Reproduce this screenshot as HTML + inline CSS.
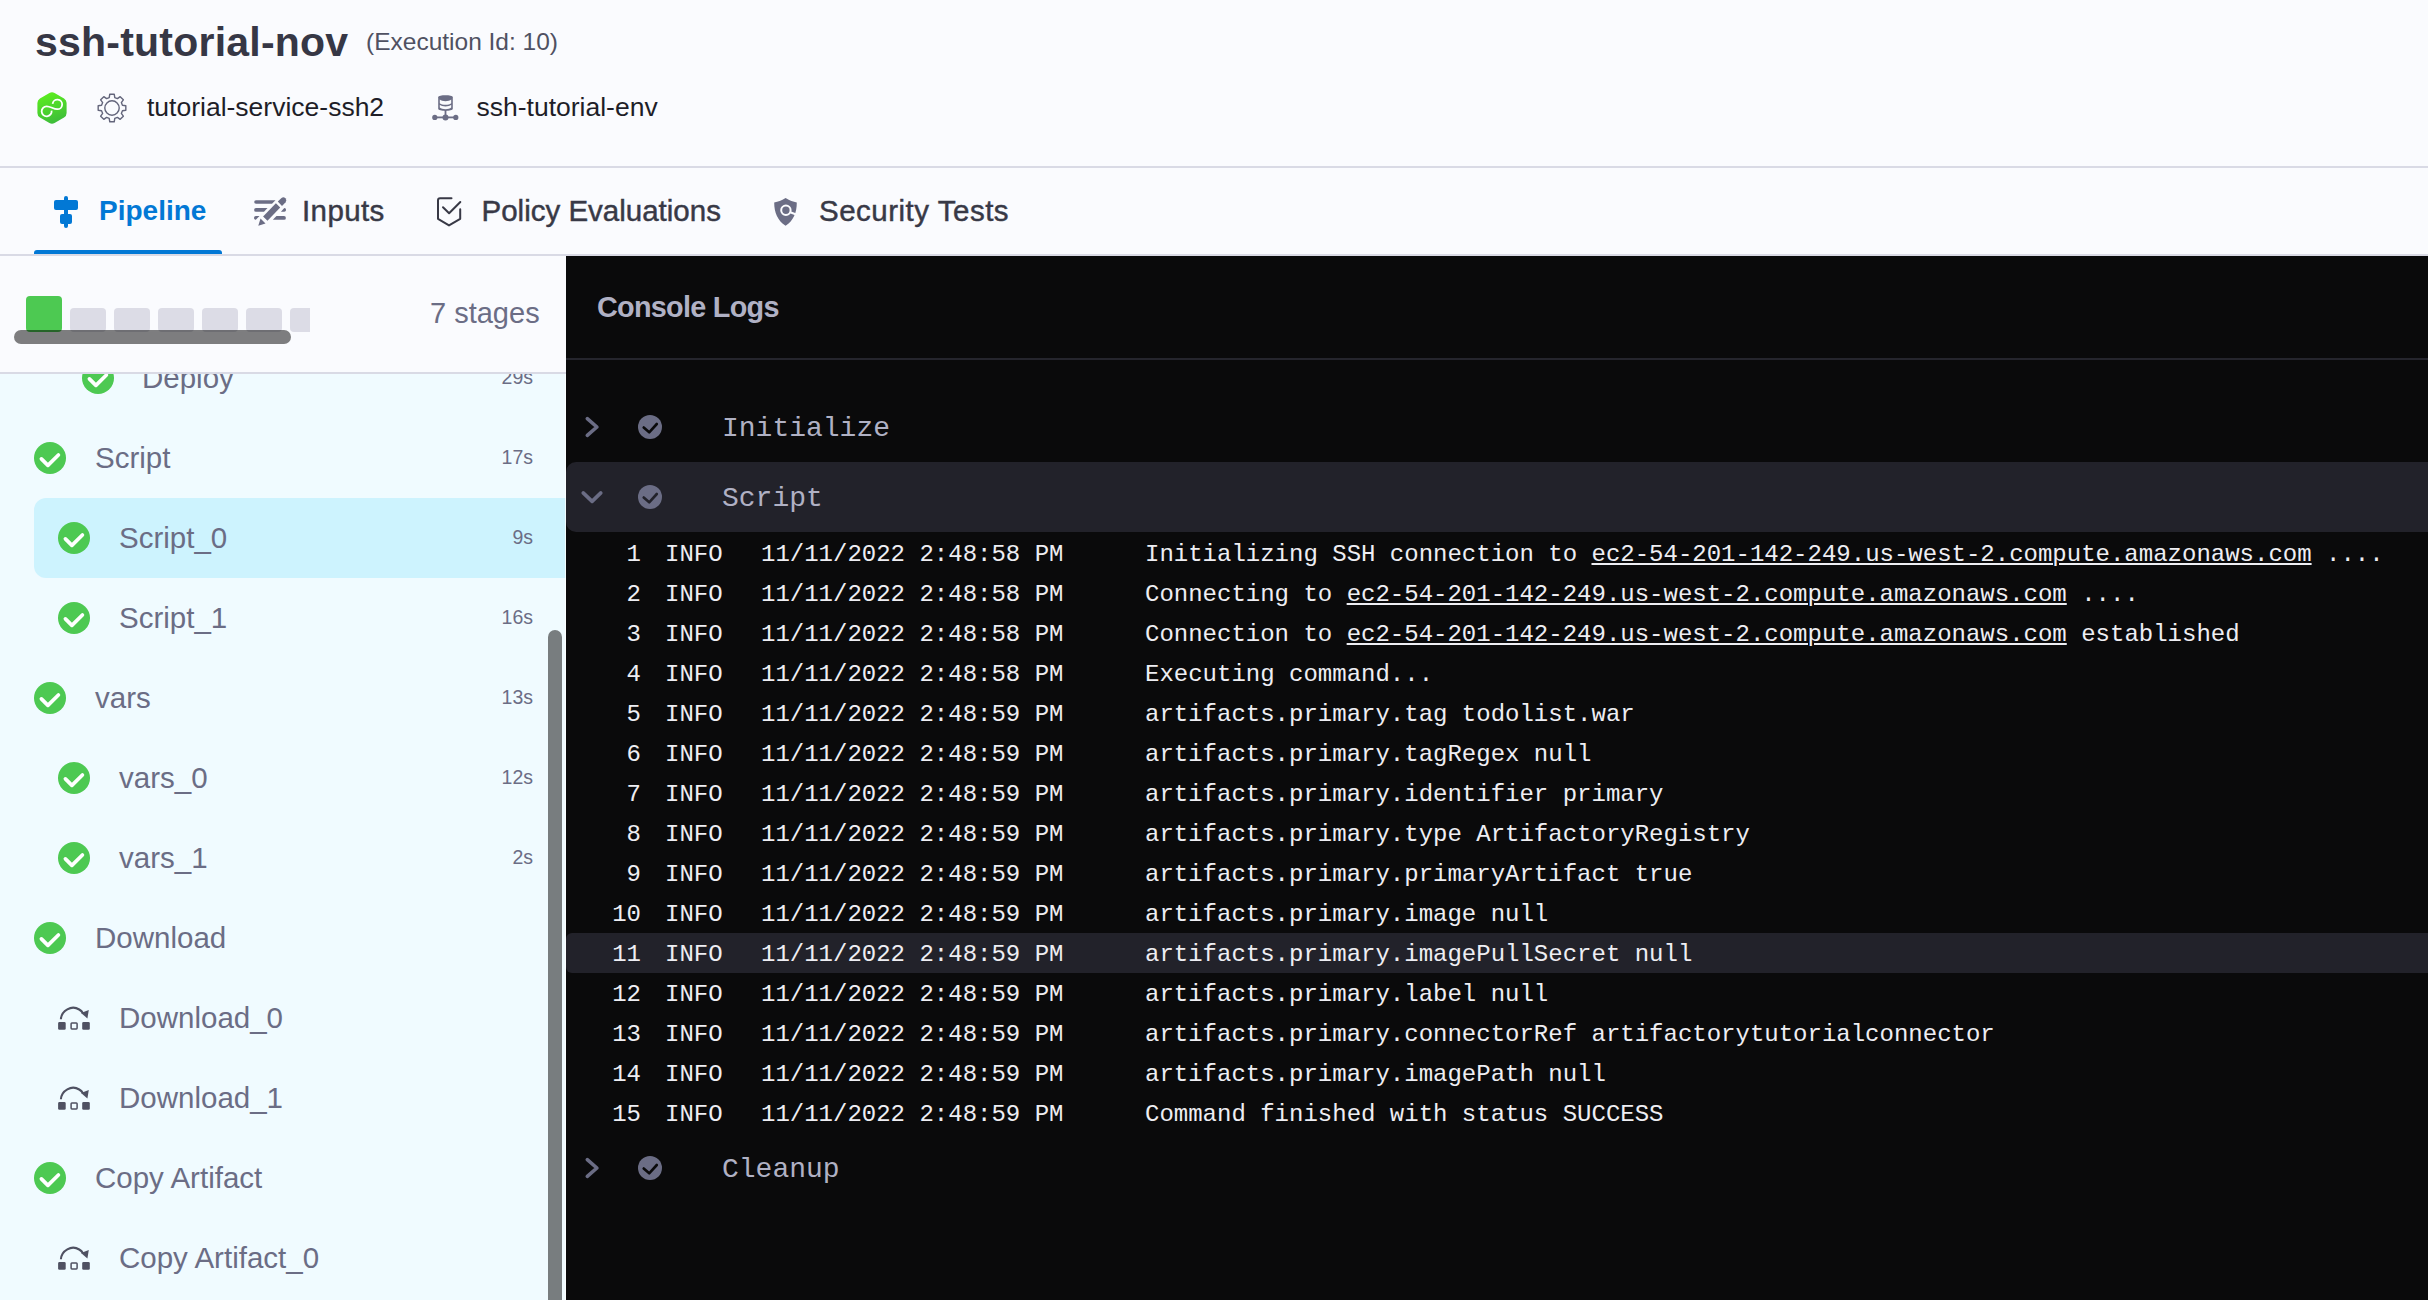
<!DOCTYPE html>
<html><head><meta charset="utf-8">
<style>
html,body{margin:0;padding:0;}
body{width:2428px;height:1300px;overflow:hidden;position:relative;background:#FAFBFE;font-family:"Liberation Sans", sans-serif;}
.t{position:absolute;line-height:1;white-space:pre;}
.abs{position:absolute;}
svg{position:absolute;left:0;top:0;overflow:visible;}
</style></head><body>
<div class="t" style="left:35px;top:22.29px;font-size:41px;color:#363745;font-weight:700;font-family:'Liberation Sans', sans-serif;letter-spacing:0.22px">ssh-tutorial-nov</div>
<div class="t" style="left:366px;top:29.76px;font-size:24.5px;color:#4F5162;font-weight:400;font-family:'Liberation Sans', sans-serif;">(Execution Id: 10)</div>
<div class="t" style="left:147px;top:94.36px;font-size:26.5px;color:#1E1E28;font-weight:400;font-family:'Liberation Sans', sans-serif;">tutorial-service-ssh2</div>
<div class="t" style="left:476.5px;top:94.36px;font-size:26.5px;color:#1E1E28;font-weight:400;font-family:'Liberation Sans', sans-serif;">ssh-tutorial-env</div>
<div class="abs" style="left:0;top:166px;width:2428px;height:2px;background:#D9DAE5"></div>
<svg width="2428" height="260" viewBox="0 0 2428 260"><defs><linearGradient id="hg" x1="0.35" y1="0" x2="0.65" y2="1"><stop offset="0" stop-color="#5CEE1E"/><stop offset="1" stop-color="#3CBA3C"/></linearGradient></defs><path d="M49.42,92.92 Q52,91.4 54.58,92.92 L64.02,98.48 Q66.6,100 66.60,103.00 L66.60,113.00 Q66.6,116 64.02,117.52 L54.58,123.08 Q52,124.6 49.42,123.08 L39.98,117.52 Q37.4,116 37.40,113.00 L37.40,103.00 Q37.4,100 39.98,98.48 Z" fill="url(#hg)"/><path d="M51.6,110.6 A5,5 0 1 1 46.7,106.3 C50.5,106.3 53.5,109.2 57.2,109.2 A4.8,4.8 0 1 0 52.6,103.8" fill="none" stroke="#fff" stroke-width="1.8" stroke-linecap="butt"/><path d="M109.22,97.56 L109.77,94.18 L114.23,94.18 L114.78,97.56 L117.42,98.66 L120.20,96.65 L123.35,99.80 L121.34,102.58 L122.44,105.22 L125.82,105.77 L125.82,110.23 L122.44,110.78 L121.34,113.42 L123.35,116.20 L120.20,119.35 L117.42,117.34 L114.78,118.44 L114.23,121.82 L109.77,121.82 L109.22,118.44 L106.58,117.34 L103.80,119.35 L100.65,116.20 L102.66,113.42 L101.56,110.78 L98.18,110.23 L98.18,105.77 L101.56,105.22 L102.66,102.58 L100.65,99.80 L103.80,96.65 L106.58,98.66 Z" fill="none" stroke="#63657B" stroke-width="1.4" stroke-linejoin="round"/><circle cx="112" cy="108" r="7.2" fill="none" stroke="#63657B" stroke-width="1.4"/><path d="M438.2,97.2 C438.2,94.6 452.8,94.6 452.8,97.2 L452.8,108.8 C452.8,111.6 438.2,111.6 438.2,108.8 Z" fill="#6B6D85"/><path d="M439.8,99.6 C442,101.8 449,101.8 451.2,99.6 L451.2,103.2 C449,105.4 442,105.4 439.8,103.2 Z" fill="#FAFBFE"/><path d="M439.8,104.8 C442,107 449,107 451.2,104.8 L451.2,107.6 C449,109.8 442,109.8 439.8,107.6 Z" fill="#FAFBFE"/><g fill="#6B6D85"><rect x="444.6" y="110" width="1.8" height="6"/><rect x="435" y="116.5" width="21" height="1.8"/><circle cx="434.8" cy="117.4" r="2.6"/><circle cx="445.5" cy="117.4" r="3"/><circle cx="455.8" cy="117.4" r="2.6"/></g><g fill="#0278D5"><rect x="64" y="196" width="4" height="32" rx="2"/><rect x="54" y="200" width="24" height="10" rx="2"/><rect x="60" y="214" width="12" height="10" rx="2"/></g><g fill="#6B6D85"><path d="M256,200.2 L275.5,200.2 L272,203.8 L256,203.8 A1.8,1.8 0 0 1 256,200.2 Z"/><path d="M256,208 L267.5,208 L264,211.8 L256,211.8 A1.9,1.9 0 0 1 256,208 Z"/><path d="M284.3,208 A1.9,1.9 0 0 1 284,211.8 L280.9,211.8 Z"/><path d="M256,216 L259.5,216 L255.8,219.8 A1.9,1.9 0 0 1 256,216 Z"/><path d="M276.5,216 L284,216 A1.9,1.9 0 0 1 284,219.8 L272.8,219.8 Z"/><path d="M275.9,203.2 L280.2,207.6 L267.5,220.8 L263.1,216.4 Z"/><path d="M277.8,201.5 L281.5,198 A3,3 0 0 1 285.6,202.3 L282,206 Z"/><path d="M260.5,218.6 L265.5,223.6 L258.3,225.8 Z"/></g><g fill="none" stroke="#383946" stroke-width="2" stroke-linecap="round" stroke-linejoin="round"><path d="M451.5,198.3 L440,198.3 Q438,198.3 438,200.3 L438,218.8 L449,225.4 L460.2,218.8 L460.2,209.2"/><path d="M443,207.2 L449.1,213.2 L460.3,202"/></g><path d="M785.6,198 C790,200.6 793,201.8 796.8,202.5 C796.8,213 793.5,220.5 785.6,225.8 C777.7,220.5 774.2,213 774.2,202.5 C778.2,201.8 781.2,200.6 785.6,198 Z" fill="#6B6D85"/><circle cx="785.9" cy="210.2" r="4.7" fill="none" stroke="#FAFBFE" stroke-width="2"/><path d="M790.2,212.2 L797.5,215" stroke="#FAFBFE" stroke-width="2"/></svg>
<div class="t" style="left:99px;top:197.29px;font-size:28px;color:#0278D5;font-weight:700;font-family:'Liberation Sans', sans-serif;">Pipeline</div>
<div class="t" style="left:302px;top:196.02px;font-size:29.5px;color:#383946;font-weight:400;font-family:'Liberation Sans', sans-serif;letter-spacing:0.4px;-webkit-text-stroke:0.45px #383946">Inputs</div>
<div class="t" style="left:481.5px;top:196.02px;font-size:29.5px;color:#383946;font-weight:400;font-family:'Liberation Sans', sans-serif;-webkit-text-stroke:0.45px #383946">Policy Evaluations</div>
<div class="t" style="left:819px;top:196.02px;font-size:29.5px;color:#383946;font-weight:400;font-family:'Liberation Sans', sans-serif;letter-spacing:0.5px;-webkit-text-stroke:0.45px #383946">Security Tests</div>
<div class="abs" style="left:0;top:254px;width:2428px;height:2px;background:#D9DAE5"></div>
<div class="abs" style="left:34px;top:250px;width:188px;height:4px;background:#0278D5;border-radius:3px 3px 0 0"></div>
<div class="abs" style="left:0;top:256px;width:566px;height:1044px;background:#F0FBFF;overflow:hidden">
<div class="abs" style="left:34px;top:242px;width:532px;height:80px;background:#CDF3FE;border-radius:12px 0 0 12px"></div>
<svg style="left:82px;top:105.5px" width="32" height="32" viewBox="0 0 32 32"><circle cx="16" cy="16" r="16" fill="#4DC952"/><path d="M7.4,16.9 L13.9,23.4 L24.4,13" fill="none" stroke="#fff" stroke-width="3.7" stroke-linecap="round" stroke-linejoin="round"/></svg><div class="t" style="left:142px;top:107.02px;font-size:29.5px;color:#6B6D85;font-weight:400;font-family:'Liberation Sans', sans-serif;">Deploy</div>
<div class="t" style="left:0;width:533px;text-align:right;top:112.49px;font-size:19.5px;color:#6B6D85">29s</div>
<svg style="left:34px;top:185.5px" width="32" height="32" viewBox="0 0 32 32"><circle cx="16" cy="16" r="16" fill="#4DC952"/><path d="M7.4,16.9 L13.9,23.4 L24.4,13" fill="none" stroke="#fff" stroke-width="3.7" stroke-linecap="round" stroke-linejoin="round"/></svg><div class="t" style="left:95px;top:187.02px;font-size:29.5px;color:#6B6D85;font-weight:400;font-family:'Liberation Sans', sans-serif;">Script</div>
<div class="t" style="left:0;width:533px;text-align:right;top:192.49px;font-size:19.5px;color:#6B6D85">17s</div>
<svg style="left:58px;top:265.5px" width="32" height="32" viewBox="0 0 32 32"><circle cx="16" cy="16" r="16" fill="#4DC952"/><path d="M7.4,16.9 L13.9,23.4 L24.4,13" fill="none" stroke="#fff" stroke-width="3.7" stroke-linecap="round" stroke-linejoin="round"/></svg><div class="t" style="left:119px;top:267.02px;font-size:29.5px;color:#6B6D85;font-weight:400;font-family:'Liberation Sans', sans-serif;">Script_0</div>
<div class="t" style="left:0;width:533px;text-align:right;top:272.49px;font-size:19.5px;color:#6B6D85">9s</div>
<svg style="left:58px;top:345.5px" width="32" height="32" viewBox="0 0 32 32"><circle cx="16" cy="16" r="16" fill="#4DC952"/><path d="M7.4,16.9 L13.9,23.4 L24.4,13" fill="none" stroke="#fff" stroke-width="3.7" stroke-linecap="round" stroke-linejoin="round"/></svg><div class="t" style="left:119px;top:347.02px;font-size:29.5px;color:#6B6D85;font-weight:400;font-family:'Liberation Sans', sans-serif;">Script_1</div>
<div class="t" style="left:0;width:533px;text-align:right;top:352.49px;font-size:19.5px;color:#6B6D85">16s</div>
<svg style="left:34px;top:425.5px" width="32" height="32" viewBox="0 0 32 32"><circle cx="16" cy="16" r="16" fill="#4DC952"/><path d="M7.4,16.9 L13.9,23.4 L24.4,13" fill="none" stroke="#fff" stroke-width="3.7" stroke-linecap="round" stroke-linejoin="round"/></svg><div class="t" style="left:95px;top:427.02px;font-size:29.5px;color:#6B6D85;font-weight:400;font-family:'Liberation Sans', sans-serif;">vars</div>
<div class="t" style="left:0;width:533px;text-align:right;top:432.49px;font-size:19.5px;color:#6B6D85">13s</div>
<svg style="left:58px;top:505.5px" width="32" height="32" viewBox="0 0 32 32"><circle cx="16" cy="16" r="16" fill="#4DC952"/><path d="M7.4,16.9 L13.9,23.4 L24.4,13" fill="none" stroke="#fff" stroke-width="3.7" stroke-linecap="round" stroke-linejoin="round"/></svg><div class="t" style="left:119px;top:507.02px;font-size:29.5px;color:#6B6D85;font-weight:400;font-family:'Liberation Sans', sans-serif;">vars_0</div>
<div class="t" style="left:0;width:533px;text-align:right;top:512.49px;font-size:19.5px;color:#6B6D85">12s</div>
<svg style="left:58px;top:585.5px" width="32" height="32" viewBox="0 0 32 32"><circle cx="16" cy="16" r="16" fill="#4DC952"/><path d="M7.4,16.9 L13.9,23.4 L24.4,13" fill="none" stroke="#fff" stroke-width="3.7" stroke-linecap="round" stroke-linejoin="round"/></svg><div class="t" style="left:119px;top:587.02px;font-size:29.5px;color:#6B6D85;font-weight:400;font-family:'Liberation Sans', sans-serif;">vars_1</div>
<div class="t" style="left:0;width:533px;text-align:right;top:592.49px;font-size:19.5px;color:#6B6D85">2s</div>
<svg style="left:34px;top:665.5px" width="32" height="32" viewBox="0 0 32 32"><circle cx="16" cy="16" r="16" fill="#4DC952"/><path d="M7.4,16.9 L13.9,23.4 L24.4,13" fill="none" stroke="#fff" stroke-width="3.7" stroke-linecap="round" stroke-linejoin="round"/></svg><div class="t" style="left:95px;top:667.02px;font-size:29.5px;color:#6B6D85;font-weight:400;font-family:'Liberation Sans', sans-serif;">Download</div>
<svg style="left:58px;top:749px" width="34" height="30" viewBox="0 0 34 30"><path d="M2.9,14.3 C3.4,5.6 13.5,-0.4 21.2,4.5 C23,5.6 24.3,7 25,8.2" fill="none" stroke="#4F5162" stroke-width="2.1"/><path d="M30.8,5 L29.4,13.4 L23,7.9 Z" fill="#4F5162"/><rect x="0.1" y="17.1" width="7.6" height="7.6" rx="1.3" fill="#4F5162"/><rect x="13.1" y="17.9" width="6" height="6" rx="0.8" fill="none" stroke="#4F5162" stroke-width="1.5"/><rect x="24.2" y="17.1" width="7.6" height="7.6" rx="1.3" fill="#4F5162"/></svg><div class="t" style="left:119px;top:747.02px;font-size:29.5px;color:#6B6D85;font-weight:400;font-family:'Liberation Sans', sans-serif;">Download_0</div>
<svg style="left:58px;top:829px" width="34" height="30" viewBox="0 0 34 30"><path d="M2.9,14.3 C3.4,5.6 13.5,-0.4 21.2,4.5 C23,5.6 24.3,7 25,8.2" fill="none" stroke="#4F5162" stroke-width="2.1"/><path d="M30.8,5 L29.4,13.4 L23,7.9 Z" fill="#4F5162"/><rect x="0.1" y="17.1" width="7.6" height="7.6" rx="1.3" fill="#4F5162"/><rect x="13.1" y="17.9" width="6" height="6" rx="0.8" fill="none" stroke="#4F5162" stroke-width="1.5"/><rect x="24.2" y="17.1" width="7.6" height="7.6" rx="1.3" fill="#4F5162"/></svg><div class="t" style="left:119px;top:827.02px;font-size:29.5px;color:#6B6D85;font-weight:400;font-family:'Liberation Sans', sans-serif;">Download_1</div>
<svg style="left:34px;top:905.5px" width="32" height="32" viewBox="0 0 32 32"><circle cx="16" cy="16" r="16" fill="#4DC952"/><path d="M7.4,16.9 L13.9,23.4 L24.4,13" fill="none" stroke="#fff" stroke-width="3.7" stroke-linecap="round" stroke-linejoin="round"/></svg><div class="t" style="left:95px;top:907.02px;font-size:29.5px;color:#6B6D85;font-weight:400;font-family:'Liberation Sans', sans-serif;">Copy Artifact</div>
<svg style="left:58px;top:989px" width="34" height="30" viewBox="0 0 34 30"><path d="M2.9,14.3 C3.4,5.6 13.5,-0.4 21.2,4.5 C23,5.6 24.3,7 25,8.2" fill="none" stroke="#4F5162" stroke-width="2.1"/><path d="M30.8,5 L29.4,13.4 L23,7.9 Z" fill="#4F5162"/><rect x="0.1" y="17.1" width="7.6" height="7.6" rx="1.3" fill="#4F5162"/><rect x="13.1" y="17.9" width="6" height="6" rx="0.8" fill="none" stroke="#4F5162" stroke-width="1.5"/><rect x="24.2" y="17.1" width="7.6" height="7.6" rx="1.3" fill="#4F5162"/></svg><div class="t" style="left:119px;top:987.02px;font-size:29.5px;color:#6B6D85;font-weight:400;font-family:'Liberation Sans', sans-serif;">Copy Artifact_0</div>
<div class="abs" style="left:548px;top:374px;width:14px;height:700px;background:rgba(0,0,0,0.5);border-radius:7px"></div>
<div class="abs" style="left:565px;top:0;width:1px;height:1044px;background:rgba(255,255,255,0.7)"></div>
<div class="abs" style="left:0;top:0;width:566px;height:116px;background:#FAFBFE"></div>
<div class="abs" style="left:0;top:116px;width:566px;height:2px;background:#D9DAE5"></div>
<div class="abs" style="left:26px;top:40px;width:36px;height:36px;background:#4DC952;border-radius:4px"></div>
<div class="abs" style="left:70px;top:52px;width:36px;height:24px;background:#DCDCE6;border-radius:4px"></div>
<div class="abs" style="left:114px;top:52px;width:36px;height:24px;background:#DCDCE6;border-radius:4px"></div>
<div class="abs" style="left:158px;top:52px;width:36px;height:24px;background:#DCDCE6;border-radius:4px"></div>
<div class="abs" style="left:202px;top:52px;width:36px;height:24px;background:#DCDCE6;border-radius:4px"></div>
<div class="abs" style="left:246px;top:52px;width:36px;height:24px;background:#DCDCE6;border-radius:4px"></div>
<div class="abs" style="left:290px;top:52px;width:20px;height:24px;background:#DCDCE6;border-radius:4px 0 0 4px"></div>
<div class="abs" style="left:14px;top:74px;width:277px;height:14px;background:rgba(0,0,0,0.5);border-radius:7px"></div>
<div class="t" style="left:430px;top:43.45px;font-size:29px;color:#6B6D85;font-weight:400;font-family:'Liberation Sans', sans-serif;">7 stages</div>
</div>
<div class="abs" style="left:566px;top:256px;width:1862px;height:1044px;background:#0A0A0B;overflow:hidden">
<div class="t" style="left:31px;top:36.62px;font-size:28.8px;color:#B0B1C4;font-weight:700;font-family:'Liberation Sans', sans-serif;letter-spacing:-0.72px">Console Logs</div>
<div class="abs" style="left:0;top:102px;width:1862px;height:2px;background:#25252D"></div>
<svg style="left:0;top:151px" width="40" height="40" viewBox="0 0 40 40"><path d="M21.3,11.6 L30.9,20 L21.3,28.4" fill="none" stroke="#6B6D85" stroke-width="3.6" stroke-linecap="round" stroke-linejoin="round"/></svg><svg style="left:72px;top:159px" width="24" height="24" viewBox="0 0 24 24"><circle cx="12" cy="12" r="12" fill="#6B6D85"/><path d="M5.7,12.5 L11.2,17.3 L18.8,9" fill="none" stroke="#0A0A0B" stroke-width="2.6" stroke-linecap="round" stroke-linejoin="round"/></svg><div class="t" style="left:156px;top:158.55px;font-size:28px;color:#B0B1C4;font-weight:400;font-family:'Liberation Mono', monospace;">Initialize</div>
<div class="abs" style="left:0;top:206px;width:1880px;height:70px;background:#22222A;border-radius:10px"></div>
<svg style="left:0;top:221px" width="40" height="40" viewBox="0 0 40 40"><path d="M17.2,15.9 L26.1,24.4 L34.8,15.9" fill="none" stroke="#6B6D85" stroke-width="3.6" stroke-linecap="round" stroke-linejoin="round"/></svg><svg style="left:72px;top:229px" width="24" height="24" viewBox="0 0 24 24"><circle cx="12" cy="12" r="12" fill="#6B6D85"/><path d="M5.7,12.5 L11.2,17.3 L18.8,9" fill="none" stroke="#22222A" stroke-width="2.6" stroke-linecap="round" stroke-linejoin="round"/></svg><div class="t" style="left:156px;top:228.55px;font-size:28px;color:#B0B1C4;font-weight:400;font-family:'Liberation Mono', monospace;">Script</div>
<svg style="left:0;top:892px" width="40" height="40" viewBox="0 0 40 40"><path d="M21.3,11.6 L30.9,20 L21.3,28.4" fill="none" stroke="#6B6D85" stroke-width="3.6" stroke-linecap="round" stroke-linejoin="round"/></svg><svg style="left:72px;top:900px" width="24" height="24" viewBox="0 0 24 24"><circle cx="12" cy="12" r="12" fill="#6B6D85"/><path d="M5.7,12.5 L11.2,17.3 L18.8,9" fill="none" stroke="#0A0A0B" stroke-width="2.6" stroke-linecap="round" stroke-linejoin="round"/></svg><div class="t" style="left:156px;top:899.55px;font-size:28px;color:#B0B1C4;font-weight:400;font-family:'Liberation Mono', monospace;">Cleanup</div>
<div class="abs" style="left:0;top:677px;width:1880px;height:40px;background:#22222A;border-radius:6px"></div>
<div class="t" style="left:0;width:75px;text-align:right;top:286.61px;font-size:24px;font-family:'Liberation Mono', monospace;color:#EEEEF3">1</div>
<div class="t" style="left:99px;top:286.61px;font-size:24px;color:#EEEEF3;font-weight:400;font-family:'Liberation Mono', monospace;">INFO</div>
<div class="t" style="left:195px;top:286.61px;font-size:24px;color:#EEEEF3;font-weight:400;font-family:'Liberation Mono', monospace;">11/11/2022 2:48:58 PM</div>
<div class="t" style="left:579px;top:286.61px;font-size:24px;color:#EEEEF3;font-weight:400;font-family:'Liberation Mono', monospace;">Initializing SSH connection to <span style="text-decoration:underline;text-decoration-thickness:2px;text-underline-offset:2px">ec2-54-201-142-249.us-west-2.compute.amazonaws.com</span> ....</div>
<div class="t" style="left:0;width:75px;text-align:right;top:326.61px;font-size:24px;font-family:'Liberation Mono', monospace;color:#EEEEF3">2</div>
<div class="t" style="left:99px;top:326.61px;font-size:24px;color:#EEEEF3;font-weight:400;font-family:'Liberation Mono', monospace;">INFO</div>
<div class="t" style="left:195px;top:326.61px;font-size:24px;color:#EEEEF3;font-weight:400;font-family:'Liberation Mono', monospace;">11/11/2022 2:48:58 PM</div>
<div class="t" style="left:579px;top:326.61px;font-size:24px;color:#EEEEF3;font-weight:400;font-family:'Liberation Mono', monospace;">Connecting to <span style="text-decoration:underline;text-decoration-thickness:2px;text-underline-offset:2px">ec2-54-201-142-249.us-west-2.compute.amazonaws.com</span> ....</div>
<div class="t" style="left:0;width:75px;text-align:right;top:366.61px;font-size:24px;font-family:'Liberation Mono', monospace;color:#EEEEF3">3</div>
<div class="t" style="left:99px;top:366.61px;font-size:24px;color:#EEEEF3;font-weight:400;font-family:'Liberation Mono', monospace;">INFO</div>
<div class="t" style="left:195px;top:366.61px;font-size:24px;color:#EEEEF3;font-weight:400;font-family:'Liberation Mono', monospace;">11/11/2022 2:48:58 PM</div>
<div class="t" style="left:579px;top:366.61px;font-size:24px;color:#EEEEF3;font-weight:400;font-family:'Liberation Mono', monospace;">Connection to <span style="text-decoration:underline;text-decoration-thickness:2px;text-underline-offset:2px">ec2-54-201-142-249.us-west-2.compute.amazonaws.com</span> established</div>
<div class="t" style="left:0;width:75px;text-align:right;top:406.61px;font-size:24px;font-family:'Liberation Mono', monospace;color:#EEEEF3">4</div>
<div class="t" style="left:99px;top:406.61px;font-size:24px;color:#EEEEF3;font-weight:400;font-family:'Liberation Mono', monospace;">INFO</div>
<div class="t" style="left:195px;top:406.61px;font-size:24px;color:#EEEEF3;font-weight:400;font-family:'Liberation Mono', monospace;">11/11/2022 2:48:58 PM</div>
<div class="t" style="left:579px;top:406.61px;font-size:24px;color:#EEEEF3;font-weight:400;font-family:'Liberation Mono', monospace;">Executing command...</div>
<div class="t" style="left:0;width:75px;text-align:right;top:446.61px;font-size:24px;font-family:'Liberation Mono', monospace;color:#EEEEF3">5</div>
<div class="t" style="left:99px;top:446.61px;font-size:24px;color:#EEEEF3;font-weight:400;font-family:'Liberation Mono', monospace;">INFO</div>
<div class="t" style="left:195px;top:446.61px;font-size:24px;color:#EEEEF3;font-weight:400;font-family:'Liberation Mono', monospace;">11/11/2022 2:48:59 PM</div>
<div class="t" style="left:579px;top:446.61px;font-size:24px;color:#EEEEF3;font-weight:400;font-family:'Liberation Mono', monospace;">artifacts.primary.tag todolist.war</div>
<div class="t" style="left:0;width:75px;text-align:right;top:486.61px;font-size:24px;font-family:'Liberation Mono', monospace;color:#EEEEF3">6</div>
<div class="t" style="left:99px;top:486.61px;font-size:24px;color:#EEEEF3;font-weight:400;font-family:'Liberation Mono', monospace;">INFO</div>
<div class="t" style="left:195px;top:486.61px;font-size:24px;color:#EEEEF3;font-weight:400;font-family:'Liberation Mono', monospace;">11/11/2022 2:48:59 PM</div>
<div class="t" style="left:579px;top:486.61px;font-size:24px;color:#EEEEF3;font-weight:400;font-family:'Liberation Mono', monospace;">artifacts.primary.tagRegex null</div>
<div class="t" style="left:0;width:75px;text-align:right;top:526.61px;font-size:24px;font-family:'Liberation Mono', monospace;color:#EEEEF3">7</div>
<div class="t" style="left:99px;top:526.61px;font-size:24px;color:#EEEEF3;font-weight:400;font-family:'Liberation Mono', monospace;">INFO</div>
<div class="t" style="left:195px;top:526.61px;font-size:24px;color:#EEEEF3;font-weight:400;font-family:'Liberation Mono', monospace;">11/11/2022 2:48:59 PM</div>
<div class="t" style="left:579px;top:526.61px;font-size:24px;color:#EEEEF3;font-weight:400;font-family:'Liberation Mono', monospace;">artifacts.primary.identifier primary</div>
<div class="t" style="left:0;width:75px;text-align:right;top:566.61px;font-size:24px;font-family:'Liberation Mono', monospace;color:#EEEEF3">8</div>
<div class="t" style="left:99px;top:566.61px;font-size:24px;color:#EEEEF3;font-weight:400;font-family:'Liberation Mono', monospace;">INFO</div>
<div class="t" style="left:195px;top:566.61px;font-size:24px;color:#EEEEF3;font-weight:400;font-family:'Liberation Mono', monospace;">11/11/2022 2:48:59 PM</div>
<div class="t" style="left:579px;top:566.61px;font-size:24px;color:#EEEEF3;font-weight:400;font-family:'Liberation Mono', monospace;">artifacts.primary.type ArtifactoryRegistry</div>
<div class="t" style="left:0;width:75px;text-align:right;top:606.61px;font-size:24px;font-family:'Liberation Mono', monospace;color:#EEEEF3">9</div>
<div class="t" style="left:99px;top:606.61px;font-size:24px;color:#EEEEF3;font-weight:400;font-family:'Liberation Mono', monospace;">INFO</div>
<div class="t" style="left:195px;top:606.61px;font-size:24px;color:#EEEEF3;font-weight:400;font-family:'Liberation Mono', monospace;">11/11/2022 2:48:59 PM</div>
<div class="t" style="left:579px;top:606.61px;font-size:24px;color:#EEEEF3;font-weight:400;font-family:'Liberation Mono', monospace;">artifacts.primary.primaryArtifact true</div>
<div class="t" style="left:0;width:75px;text-align:right;top:646.61px;font-size:24px;font-family:'Liberation Mono', monospace;color:#EEEEF3">10</div>
<div class="t" style="left:99px;top:646.61px;font-size:24px;color:#EEEEF3;font-weight:400;font-family:'Liberation Mono', monospace;">INFO</div>
<div class="t" style="left:195px;top:646.61px;font-size:24px;color:#EEEEF3;font-weight:400;font-family:'Liberation Mono', monospace;">11/11/2022 2:48:59 PM</div>
<div class="t" style="left:579px;top:646.61px;font-size:24px;color:#EEEEF3;font-weight:400;font-family:'Liberation Mono', monospace;">artifacts.primary.image null</div>
<div class="t" style="left:0;width:75px;text-align:right;top:686.61px;font-size:24px;font-family:'Liberation Mono', monospace;color:#EEEEF3">11</div>
<div class="t" style="left:99px;top:686.61px;font-size:24px;color:#EEEEF3;font-weight:400;font-family:'Liberation Mono', monospace;">INFO</div>
<div class="t" style="left:195px;top:686.61px;font-size:24px;color:#EEEEF3;font-weight:400;font-family:'Liberation Mono', monospace;">11/11/2022 2:48:59 PM</div>
<div class="t" style="left:579px;top:686.61px;font-size:24px;color:#EEEEF3;font-weight:400;font-family:'Liberation Mono', monospace;">artifacts.primary.imagePullSecret null</div>
<div class="t" style="left:0;width:75px;text-align:right;top:726.61px;font-size:24px;font-family:'Liberation Mono', monospace;color:#EEEEF3">12</div>
<div class="t" style="left:99px;top:726.61px;font-size:24px;color:#EEEEF3;font-weight:400;font-family:'Liberation Mono', monospace;">INFO</div>
<div class="t" style="left:195px;top:726.61px;font-size:24px;color:#EEEEF3;font-weight:400;font-family:'Liberation Mono', monospace;">11/11/2022 2:48:59 PM</div>
<div class="t" style="left:579px;top:726.61px;font-size:24px;color:#EEEEF3;font-weight:400;font-family:'Liberation Mono', monospace;">artifacts.primary.label null</div>
<div class="t" style="left:0;width:75px;text-align:right;top:766.61px;font-size:24px;font-family:'Liberation Mono', monospace;color:#EEEEF3">13</div>
<div class="t" style="left:99px;top:766.61px;font-size:24px;color:#EEEEF3;font-weight:400;font-family:'Liberation Mono', monospace;">INFO</div>
<div class="t" style="left:195px;top:766.61px;font-size:24px;color:#EEEEF3;font-weight:400;font-family:'Liberation Mono', monospace;">11/11/2022 2:48:59 PM</div>
<div class="t" style="left:579px;top:766.61px;font-size:24px;color:#EEEEF3;font-weight:400;font-family:'Liberation Mono', monospace;">artifacts.primary.connectorRef artifactorytutorialconnector</div>
<div class="t" style="left:0;width:75px;text-align:right;top:806.61px;font-size:24px;font-family:'Liberation Mono', monospace;color:#EEEEF3">14</div>
<div class="t" style="left:99px;top:806.61px;font-size:24px;color:#EEEEF3;font-weight:400;font-family:'Liberation Mono', monospace;">INFO</div>
<div class="t" style="left:195px;top:806.61px;font-size:24px;color:#EEEEF3;font-weight:400;font-family:'Liberation Mono', monospace;">11/11/2022 2:48:59 PM</div>
<div class="t" style="left:579px;top:806.61px;font-size:24px;color:#EEEEF3;font-weight:400;font-family:'Liberation Mono', monospace;">artifacts.primary.imagePath null</div>
<div class="t" style="left:0;width:75px;text-align:right;top:846.61px;font-size:24px;font-family:'Liberation Mono', monospace;color:#EEEEF3">15</div>
<div class="t" style="left:99px;top:846.61px;font-size:24px;color:#EEEEF3;font-weight:400;font-family:'Liberation Mono', monospace;">INFO</div>
<div class="t" style="left:195px;top:846.61px;font-size:24px;color:#EEEEF3;font-weight:400;font-family:'Liberation Mono', monospace;">11/11/2022 2:48:59 PM</div>
<div class="t" style="left:579px;top:846.61px;font-size:24px;color:#EEEEF3;font-weight:400;font-family:'Liberation Mono', monospace;">Command finished with status SUCCESS</div>
</div>
</body></html>
